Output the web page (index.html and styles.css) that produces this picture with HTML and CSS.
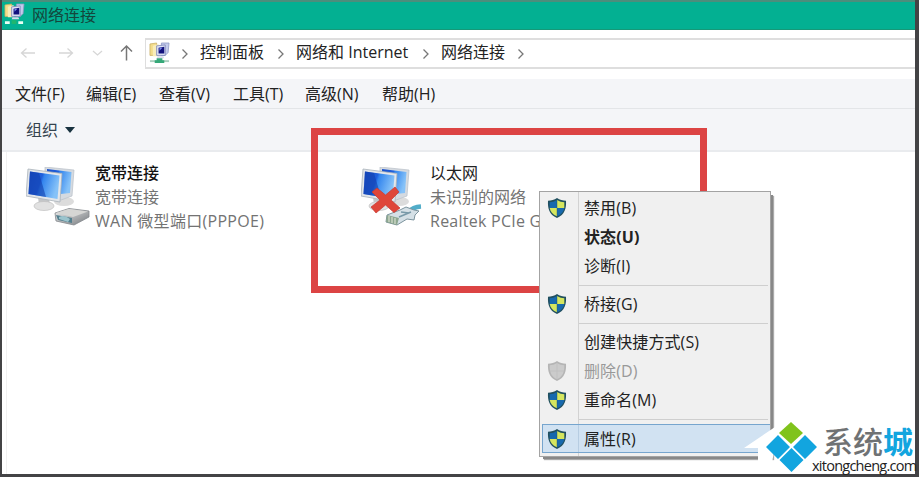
FILE: index.html
```html
<!DOCTYPE html>
<html lang="zh-CN">
<head>
<meta charset="utf-8">
<title>网络连接</title>
<link rel="stylesheet" href="styles.css">
</head>
<body>
<svg class="defs" width="0" height="0" aria-hidden="true">
  <defs>
    <linearGradient id="screen" x1="0" y1="0" x2="1" y2="0.300">
      <stop offset="0" stop-color="#1a4fc8"/><stop offset=".45" stop-color="#1f60dc"/><stop offset=".52" stop-color="#3385ee"/><stop offset="1" stop-color="#86c2f8"/>
    </linearGradient>
    <linearGradient id="metal" x1="0" y1="0" x2="1" y2="1">
      <stop offset="0" stop-color="#f1f1f1"/><stop offset="1" stop-color="#75797d"/>
    </linearGradient>
    <symbol id="monitors" viewBox="0 0 66 62">
      <ellipse cx="38" cy="34.500" rx="10" ry="4.500" fill="#dcdcdc"/>
      <path d="M19 0L48 3L46 29L35 33L19 27Z" fill="#d5dae0" stroke="#b9c0c8" stroke-width=".7"/>
      <path d="M21 2L45.500 5L44 26L35 27L22 25Z" fill="url(#screen)"/>
      <path d="M12 30L23 31L24 38L13 38Z" fill="#c4c6c8"/>
      <ellipse cx="18" cy="39" rx="10" ry="4.500" fill="#e1e1e1" stroke="#c0c0c0" stroke-width=".7"/>
      <path d="M2 2L36 6.500L34 35L0 29Z" fill="#e3e6ea" stroke="#aab2ba" stroke-width=".8"/>
      <path d="M4 4.500L33.500 8.500L31.500 32L2.500 27Z" fill="url(#screen)"/>
      <path d="M4 4.500L13 6L20 30L2.500 27Z" fill="#123fae" opacity=".6"/>
    </symbol>
    <symbol id="shield" viewBox="0 0 20 22">
      <path d="M10 1C7.500 3 4 3.700 1 3.700C.6 11 2 17.500 10 21C18 17.500 19.400 11 19 3.700C16 3.700 12.500 3 10 1Z" fill="#21505f"/>
      <path d="M9.800 3C7.500 4.500 5 5.100 2.700 5.300L2.700 11H9.800Z" fill="#1769ae"/>
      <path d="M10.200 3C12.500 4.500 15 5.100 17.300 5.300L17.300 11H10.200Z" fill="#d5e65f"/>
      <path d="M2.700 11H9.800V19.300C5.500 17.500 3.300 14.500 2.700 11Z" fill="#d5e65f"/>
      <path d="M17.300 11H10.200V19.300C14.500 17.500 16.700 14.500 17.300 11Z" fill="#1769ae"/>
    </symbol>
    <symbol id="shield-off" viewBox="0 0 20 22">
      <path d="M10 1C7.500 3 4 3.700 1 3.700C.6 11 2 17.500 10 21C18 17.500 19.400 11 19 3.700C16 3.700 12.500 3 10 1Z" fill="#b5b5b5"/>
      <path d="M10 3C7.500 4.500 5 5.100 2.700 5.300C2.500 12 4.500 17 10 19.300C15.500 17 17.500 12 17.300 5.300C15 5.100 12.500 4.500 10 3Z" fill="#cbcbcb"/>
      <path d="M10 3V19.300M2.700 11H17.300" stroke="#bdbdbd" stroke-width=".7"/>
    </symbol>
    <symbol id="netfolder" viewBox="0 0 22 22">
      <path d="M1 2L8 1V14H1Z" fill="#f3dc8b" stroke="#c9ad62" stroke-width=".8"/>
      <path d="M4 4L10 2V15H4Z" fill="#f9edb9"/>
      <path d="M13 1H21L20 11L17 14H13Z" fill="#c3cbec" stroke="#8c96c2" stroke-width=".8"/>
      <path d="M8 4L17 3V14L8 14Z" fill="#dfe4f6" stroke="#767eb5" stroke-width=".8"/>
      <path d="M10 6L16 5V12L10 12Z" fill="#12127e"/>
      <path d="M11 6L14 6L11 9Z" fill="#7889ed"/>
      <path d="M9 15H15L16 17H8Z" fill="#d9dded"/>
    </symbol>
  </defs>
</svg>

<div class="window">
  <header class="titlebar">
    <svg class="title-icon" viewBox="0 0 22 24"><use href="#netfolder" width="22" height="22"/><path d="M1 19H6V22H1ZM15 19H20V22H15Z" fill="#e9fff4"/><path d="M8 18H13V22H8Z" fill="#20b66f"/></svg>
    <span>网络连接</span>
  </header>

  <nav class="navbar">
    <svg class="nav-arrows" viewBox="0 0 125 24" fill="none">
      <path d="M33 12H19.500M24.500 7.500L19.500 12L24.500 16.500M57 12H70.500M65.500 7.500L70.500 12L65.500 16.500M91 10L95.500 14L100 10" stroke="#d6d6d6" stroke-width="1.300"/>
      <path d="M124.500 19.500V5M119 10.500L124.500 5L130 10.500" stroke="#777" stroke-width="1.500"/>
    </svg>
    <div class="address">
      <svg class="address-icon" viewBox="0 0 22 24"><use href="#netfolder" width="22" height="22"/><path d="M1 19H21V21H1Z" fill="#a9cfbd"/><path d="M8 17H14V19H16V22H6V19H8Z" fill="#35a878"/></svg>
      <svg class="chev" viewBox="0 0 8 12"><path d="M1.500 1.500L6 6L1.500 10.500"/></svg>
      <span class="crumb crumb-panel">控制面板</span>
      <svg class="chev" viewBox="0 0 8 12"><path d="M1.500 1.500L6 6L1.500 10.500"/></svg>
      <span class="crumb crumb-net">网络和 Internet</span>
      <svg class="chev" viewBox="0 0 8 12"><path d="M1.500 1.500L6 6L1.500 10.500"/></svg>
      <span class="crumb crumb-conn">网络连接</span>
      <svg class="chev" viewBox="0 0 8 12"><path d="M1.500 1.500L6 6L1.500 10.500"/></svg>
    </div>
  </nav>

  <div class="menubar">
    <span>文件(F)</span><span>编辑(E)</span><span>查看(V)</span><span>工具(T)</span><span>高级(N)</span><span>帮助(H)</span>
  </div>

  <div class="toolbar"><span>组织</span><i class="caret"></i></div>

  <main class="content">
    <section class="connection broadband">
      <svg class="device" viewBox="0 0 66 62">
        <use href="#monitors" width="66" height="62"/>
        <path d="M29 46L43 41.500L63 44V50L48 58L30 54Z" fill="url(#metal)" stroke="#83878b" stroke-width=".8"/>
        <path d="M30 46L43 42L62 44.500L47 50Z" fill="#d6d6d4"/>
        <path d="M30 48L46 51V56L32 53Z" fill="#537f8e"/>
        <path d="M33 50Q38 47 44 52L42 55L33 52Z" fill="#9bc4cd"/>
      </svg>
      <div class="labels"><b>宽带连接</b><span>宽带连接</span><span class="adapter">WAN 微型端口(PPPOE)</span></div>
    </section>
    <section class="connection ethernet">
      <svg class="device" viewBox="0 0 66 62">
        <use href="#monitors" width="66" height="62"/>
        <path d="M47 45Q52 40 60 39.500" fill="none" stroke="#51adc9" stroke-width="4.500"/>
        <path d="M26 48L39 43L45 40L53 43L58 44L54 48L53 53L46 52L36 58L25 55Z" fill="#d5e0e6" stroke="#7d949e" stroke-width="1"/>
        <path d="M26 48L38 51L36 58L25 55Z" fill="#8da790"/>
        <path d="M28 49V55M31 50V56M34 51V57" stroke="#e7eadc" stroke-width="1"/>
        <path d="M38 50L50 45M40 45L48 46" stroke="#7899a8" stroke-width="1.500"/>
        <path d="M11 25L16 21L24.500 28L34 20L38 25L30 33L39 41L33 45.500L24.500 38L15 46L10 40L19 33Z" fill="#df4639" stroke="#c93830" stroke-width=".7"/>
      </svg>
      <div class="labels"><em>以太网</em><span>未识别的网络</span><span class="adapter">Realtek PCIe GBE</span></div>
    </section>
  </main>
</div>

<div class="highlight"></div>

<div class="context-menu">
  <div class="item"><svg><use href="#shield"/></svg><span>禁用(B)</span></div>
  <div class="item default"><i></i><span>状态(U)</span></div>
  <div class="item"><i></i><span>诊断(I)</span></div>
  <hr>
  <div class="item"><svg><use href="#shield"/></svg><span>桥接(G)</span></div>
  <hr>
  <div class="item"><i></i><span>创建快捷方式(S)</span></div>
  <div class="item disabled"><svg><use href="#shield-off"/></svg><span>删除(D)</span></div>
  <div class="item"><svg><use href="#shield"/></svg><span>重命名(M)</span></div>
  <hr>
  <div class="item selected"><svg><use href="#shield"/></svg><span>属性(R)</span></div>
</div>

<div class="brand">
  <svg class="brand-mark" viewBox="0 0 66 52">
    <path d="M0 26L31 5L43 12L30 30L27 46V52H14V26Z" fill="#fff"/>
    <path d="M47 0L59 11L47 22L35 11Z" fill="#80c31c"/>
    <path d="M34 13L46 25L34 37L22 25ZM61 13L73 25L61 37L49 25ZM47.500 26L59.500 38L47.500 50L35.500 38Z" fill="#12a5df"/>
  </svg>
  <div class="brand-text">
    <div class="brand-name">系统<span>城</span></div>
    <div class="brand-url">xitongcheng.com</div>
  </div>
</div>
</body>
</html>
```
FILE: styles.css
```css
* { box-sizing: border-box; }

body {
  margin: 0;
  width: 919px;
  height: 477px;
  overflow: hidden;
  position: relative;
  background: #434345;
  color: #222;
  font: 16px/24px "Open Sans", "Noto Sans CJK SC", sans-serif;
  white-space: nowrap;
}

.defs { position: absolute; }
svg { display: block; flex: none; overflow: visible; }

.window {
  width: 913px;
  height: 474px;
  margin-left: 2px;
  background: #fff;
  overflow: hidden;
}

.titlebar {
  display: flex;
  height: 30px;
  padding-left: 2px;
  border-top: 2px solid #4c8e7c;
  border-bottom: 1px solid #169878;
  background: #03b092;
  color: #14463c;
}
.title-icon { width: 21px; height: 23px; margin-top: 1px; }
.titlebar span { margin: 1px 0 0 7px; }

.navbar { display: flex; height: 49px; padding-top: 8px; }
.nav-arrows { width: 125px; height: 24px; margin-top: 3px; }
.address {
  flex: 1;
  display: flex;
  align-items: center;
  height: 31px;
  margin-left: 18px;
  padding-left: 3px;
  border: solid #dedede;
  border-width: 2px 0 2px 1px;
}
.address-icon { width: 21px; height: 23px; }
.chev { width: 8px; height: 12px; margin-left: 11px; fill: none; stroke: #777; stroke-width: 1.3; }
.crumb { margin: 0 0 3px 11px; }
.crumb-panel { width: 66px; }
.crumb-net { width: 114px; margin-right: 1px; }
.crumb-conn { width: 65px; }

.menubar {
  display: grid;
  grid-template-columns: 71px 73px 74px 72px 77px 80px;
  height: 30px;
  padding: 3px 0 0 13px;
  border-bottom: 1px solid #e3e5e8;
  background: #f4f5f8;
}

.toolbar {
  display: flex;
  align-items: center;
  height: 43px;
  padding-left: 24px;
  border-bottom: 2px solid #e9ebee;
  background: #f4f5f8;
  color: #34434f;
}
.caret {
  margin-left: 7px;
  border: 5px solid transparent;
  border-top: 6px solid #193240;
  border-bottom: 0;
}

.content {
  display: flex;
  height: 322px;
  margin-left: 4px;
  border-left: 1px solid #f1f1f1;
  padding: 9px 0 0 19px;
}
.connection { display: flex; width: 335px; }
.device { width: 66px; height: 62px; margin-top: 6px; }
.labels { display: flex; flex-direction: column; margin-left: 3px; color: #737373; }
.labels b { color: #111; font-weight: 500; }
.labels em { color: #222; font-style: normal; }
.broadband .adapter { letter-spacing: .3px; }
.ethernet .adapter { letter-spacing: .25px; }

.highlight {
  position: absolute;
  left: 311px;
  top: 128px;
  width: 396px;
  height: 165px;
  border: 7px solid #dc4444;
}

.context-menu {
  position: absolute;
  left: 539px;
  top: 191px;
  width: 232px;
  height: 266px;
  padding: 2px 0 0 2px;
  border: 1px solid #a3a3a3;
  background: linear-gradient(90deg, transparent 38px, #d2d2d2 38px, #d2d2d2 39px, transparent 39px) #f0f0f0;
  box-shadow: 3px 3px 0 -1px #888, 4px 4px 1px -1px #aaa;
}
.item {
  display: grid;
  grid-template-columns: 20px 1fr;
  align-items: center;
  column-gap: 17px;
  height: 29px;
  padding-left: 5px;
  letter-spacing: .1px;
}
.item span { margin-bottom: 2px; }
.item svg { width: 20px; height: 22px; margin-bottom: 2px; }
.item.default { font-weight: 700; }
.item.disabled { color: #999; }
.item.selected {
  padding-left: 4px;
  border: 1px solid #76a5ce;
  border-right: 0;
  background: linear-gradient(90deg, transparent 35px, #b7cde2 35px, #b7cde2 36px, transparent 36px) #d1e2f2;
}
.item.selected span, .item.selected svg { margin-bottom: 0; }
hr { height: 1px; margin: 4px 2px 4px 37px; border: 0; background: #cfcfcf; }

.brand {
  position: absolute;
  left: 744px;
  top: 422px;
  display: flex;
  width: 171px;
  height: 52px;
}
.brand-mark { width: 66px; height: 52px; }
.brand-text { display: flex; flex-direction: column; }
.brand-name {
  height: 36px;
  margin-left: 13px;
  color: #6f7274;
  font: 500 30px/36px "Noto Sans CJK SC", sans-serif;
}
.brand-name span { color: #12a5df; font-weight: 700; }
.brand-url { margin-left: 2px; font: 14.500px/16px "Open Sans", sans-serif; letter-spacing: -.75px; }
```
